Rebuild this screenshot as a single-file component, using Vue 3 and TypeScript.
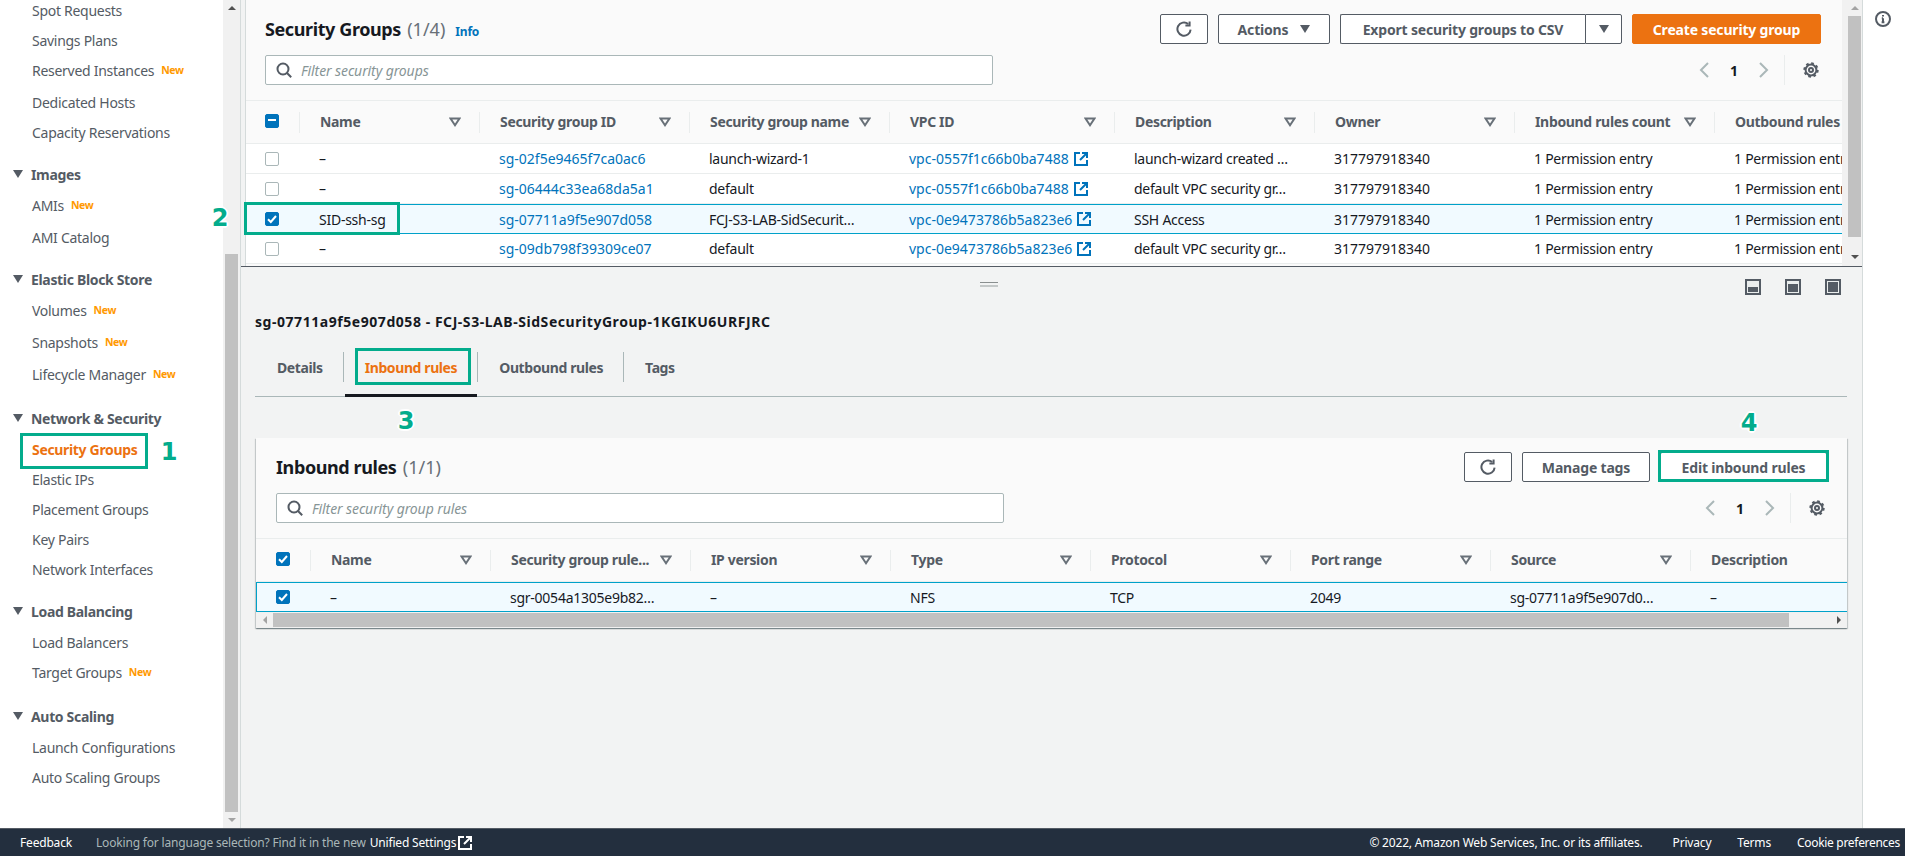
<script setup lang="ts">
interface NavItem {
  label: string
  isNew?: boolean
  active?: boolean
}

interface NavSection {
  title?: string
  items: NavItem[]
}

interface SgRow {
  name: string
  id: string
  sgName: string
  vpc: string
  desc: string
  selected?: boolean
}

const navSections: NavSection[] = [
  {
    items: [
      { label: 'Spot Requests' },
      { label: 'Savings Plans' },
      { label: 'Reserved Instances', isNew: true },
      { label: 'Dedicated Hosts' },
      { label: 'Capacity Reservations' }
    ]
  },
  {
    title: 'Images',
    items: [{ label: 'AMIs', isNew: true }, { label: 'AMI Catalog' }]
  },
  {
    title: 'Elastic Block Store',
    items: [
      { label: 'Volumes', isNew: true },
      { label: 'Snapshots', isNew: true },
      { label: 'Lifecycle Manager', isNew: true }
    ]
  },
  {
    title: 'Network & Security',
    items: [
      { label: 'Security Groups', active: true },
      { label: 'Elastic IPs' },
      { label: 'Placement Groups' },
      { label: 'Key Pairs' },
      { label: 'Network Interfaces' }
    ]
  },
  {
    title: 'Load Balancing',
    items: [{ label: 'Load Balancers' }, { label: 'Target Groups', isNew: true }]
  },
  {
    title: 'Auto Scaling',
    items: [{ label: 'Launch Configurations' }, { label: 'Auto Scaling Groups' }]
  }
]

const sgColumns = [
  'Name',
  'Security group ID',
  'Security group name',
  'VPC ID',
  'Description',
  'Owner',
  'Inbound rules count',
  'Outbound rules count'
]

const sgRows: SgRow[] = [
  {
    name: '–',
    id: 'sg-02f5e9465f7ca0ac6',
    sgName: 'launch-wizard-1',
    vpc: 'vpc-0557f1c66b0ba7488',
    desc: 'launch-wizard created …'
  },
  {
    name: '–',
    id: 'sg-06444c33ea68da5a1',
    sgName: 'default',
    vpc: 'vpc-0557f1c66b0ba7488',
    desc: 'default VPC security gr…'
  },
  {
    name: 'SID-ssh-sg',
    id: 'sg-07711a9f5e907d058',
    sgName: 'FCJ-S3-LAB-SidSecurit…',
    vpc: 'vpc-0e9473786b5a823e6',
    desc: 'SSH Access',
    selected: true
  },
  {
    name: '–',
    id: 'sg-09db798f39309ce07',
    sgName: 'default',
    vpc: 'vpc-0e9473786b5a823e6',
    desc: 'default VPC security gr…'
  }
]

const ruleColumns = [
  'Name',
  'Security group rule...',
  'IP version',
  'Type',
  'Protocol',
  'Port range',
  'Source',
  'Description'
]

const ruleCells = ['–', 'sgr-0054a1305e9b82…', '–', 'NFS', 'TCP', '2049', 'sg-07711a9f5e907d0…', '–']

const tabs = ['Details', 'Inbound rules', 'Outbound rules', 'Tags']
</script>

<template>
  <div class="app">
    <div class="body-row">
      <aside class="sidebar">
        <nav class="nav">
          <section v-for="(section, i) in navSections" :key="i" class="nav-section">
            <div v-if="section.title" class="nav-heading">
              <span class="caret"></span>{{ section.title }}
            </div>
            <a
              v-for="item in section.items"
              :key="item.label"
              :class="['nav-item', { 'has-new': item.isNew, active: item.active }]"
            >
              {{ item.label }}<span v-if="item.isNew" class="new-tag">New</span>
            </a>
          </section>
        </nav>
        <div class="vscroll side-scroll">
          <span class="arrow up"></span>
          <span class="thumb"></span>
          <span class="arrow down"></span>
        </div>
      </aside>

      <main class="main">
        <div class="top-pane">
          <div class="panel top-panel">
            <div class="panel-head">
              <div class="head-row">
                <h1 class="title">Security Groups <span class="count">(1/4)</span><a class="info">Info</a></h1>
                <div class="actions">
                  <button class="btn icon-btn">
                    <svg width="16" height="16" viewBox="0 0 16 16" class="ico">
                      <path d="M14.6 8.6A6.6 6.6 0 1 1 12.2 3" />
                      <path d="M13.6 .4v4.2H9.4" />
                    </svg>
                  </button>
                  <button class="btn actions-btn">Actions<span class="btn-caret"></span></button>
                  <div class="split">
                    <button class="btn export-btn">Export security groups to CSV</button>
                    <button class="btn split-caret"><span class="btn-caret"></span></button>
                  </div>
                  <button class="btn primary">Create security group</button>
                </div>
              </div>
              <div class="filter-row">
                <div class="filter filter-top">
                  <svg width="16" height="16" viewBox="0 0 16 16" class="ico search">
                    <circle cx="7" cy="7" r="5.5" />
                    <path d="M11 11l4.2 4.2" />
                  </svg>
                  <span class="placeholder">Filter security groups</span>
                </div>
                <div class="pager">
                  <svg width="30" height="16" viewBox="0 0 30 16" class="chev"><path d="M19 1l-7 7 7 7" /></svg>
                  <span class="page-num">1</span>
                  <svg width="30" height="16" viewBox="0 0 30 16" class="chev"><path d="M11 1l7 7-7 7" /></svg>
                  <span class="pager-sep"></span>
                  <svg width="16" height="16" viewBox="0 0 16 16" class="ico gear">
                    <circle cx="8" cy="8" r="5.4" />
                    <circle cx="8" cy="8" r="2" />
                    <circle cx="8" cy="8" r="6.6" class="teeth" />
                  </svg>
                </div>
              </div>
            </div>

            <div class="grid-row header-row sg-cols">
              <div class="th check-cell"><span class="checkbox mixed"></span></div>
              <div v-for="col in sgColumns" :key="col" class="th">
                {{ col }}
                <svg width="12" height="10" viewBox="0 0 12 10" class="sort"><path d="M1.5 1.5h9L6 8.2z" /></svg>
              </div>
            </div>
            <div
              v-for="row in sgRows"
              :key="row.id"
              :class="['grid-row', 'body-cells', 'sg-cols', { selected: row.selected }]"
            >
              <div class="td check-cell">
                <span :class="['checkbox', { checked: row.selected }]">
                  <svg v-if="row.selected" width="14" height="14" viewBox="0 0 14 14" class="tick"><path d="M3 7.2l2.8 2.8L11 4" /></svg>
                </span>
              </div>
              <div class="td">{{ row.name }}</div>
              <div class="td"><a class="link">{{ row.id }}</a></div>
              <div class="td">{{ row.sgName }}</div>
              <div class="td">
                <a class="link">{{ row.vpc }}</a>
                <svg width="14" height="14" viewBox="0 0 14 14" class="ext">
                  <path d="M6 1H1v12h12V8" />
                  <path d="M8 1h5v5M13 1L6 8" />
                </svg>
              </div>
              <div class="td">{{ row.desc }}</div>
              <div class="td num">317797918340</div>
              <div class="td">1 Permission entry</div>
              <div class="td">1 Permission entry</div>
            </div>
          </div>
          <div class="vscroll top-scroll">
            <span class="arrow up"></span>
            <span class="thumb"></span>
            <span class="arrow down"></span>
          </div>
        </div>

        <div class="lower-pane">
          <div class="handle"></div>
          <div class="view-icons">
            <span class="view-icon bottom"></span>
            <span class="view-icon middle"></span>
            <span class="view-icon full"></span>
          </div>
          <h2 class="detail-title">sg-07711a9f5e907d058 - FCJ-S3-LAB-SidSecurityGroup-1KGIKU6URFJRC</h2>
          <div class="tabs">
            <div v-for="tab in tabs" :key="tab" :class="['tab', { 'tab-active': tab === 'Inbound rules' }]">{{ tab }}</div>
          </div>

          <div class="panel rules-panel">
            <div class="panel-head">
              <div class="head-row">
                <h1 class="title">Inbound rules <span class="count">(1/1)</span></h1>
                <div class="actions">
                  <button class="btn icon-btn">
                    <svg width="16" height="16" viewBox="0 0 16 16" class="ico">
                      <path d="M14.6 8.6A6.6 6.6 0 1 1 12.2 3" />
                      <path d="M13.6 .4v4.2H9.4" />
                    </svg>
                  </button>
                  <button class="btn manage-btn">Manage tags</button>
                  <button class="btn edit-btn">Edit inbound rules</button>
                </div>
              </div>
              <div class="filter-row">
                <div class="filter filter-rules">
                  <svg width="16" height="16" viewBox="0 0 16 16" class="ico search">
                    <circle cx="7" cy="7" r="5.5" />
                    <path d="M11 11l4.2 4.2" />
                  </svg>
                  <span class="placeholder">Filter security group rules</span>
                </div>
                <div class="pager">
                  <svg width="30" height="16" viewBox="0 0 30 16" class="chev"><path d="M19 1l-7 7 7 7" /></svg>
                  <span class="page-num">1</span>
                  <svg width="30" height="16" viewBox="0 0 30 16" class="chev"><path d="M11 1l7 7-7 7" /></svg>
                  <span class="pager-sep"></span>
                  <svg width="16" height="16" viewBox="0 0 16 16" class="ico gear">
                    <circle cx="8" cy="8" r="5.4" />
                    <circle cx="8" cy="8" r="2" />
                    <circle cx="8" cy="8" r="6.6" class="teeth" />
                  </svg>
                </div>
              </div>
            </div>

            <div class="grid-row header-row rule-cols">
              <div class="th check-cell">
                <span class="checkbox checked">
                  <svg width="14" height="14" viewBox="0 0 14 14" class="tick"><path d="M3 7.2l2.8 2.8L11 4" /></svg>
                </span>
              </div>
              <div v-for="col in ruleColumns" :key="col" class="th">
                {{ col }}
                <svg width="12" height="10" viewBox="0 0 12 10" class="sort"><path d="M1.5 1.5h9L6 8.2z" /></svg>
              </div>
            </div>
            <div class="grid-row body-cells rule-cols selected rule-row">
              <div class="td check-cell">
                <span class="checkbox checked">
                  <svg width="14" height="14" viewBox="0 0 14 14" class="tick"><path d="M3 7.2l2.8 2.8L11 4" /></svg>
                </span>
              </div>
              <div v-for="(cell, i) in ruleCells" :key="i" class="td">{{ cell }}</div>
            </div>
            <div class="hscroll">
              <span class="arrow left"></span>
              <span class="hthumb"></span>
              <span class="arrow right"></span>
            </div>
          </div>
        </div>
      </main>

      <aside class="rail">
        <svg width="16" height="16" viewBox="0 0 16 16" class="rail-info">
          <circle cx="8" cy="8" r="7" />
          <path d="M8 7.2v4M6.6 11.2h2.8M6.8 7.2H8" />
          <path d="M8 4v1.6" />
        </svg>
      </aside>
    </div>

    <footer class="footer">
      <a class="foot-link feedback">Feedback</a>
      <span class="foot-note">Looking for language selection? Find it in the new</span>
      <a class="foot-link unified">Unified Settings</a>
      <svg width="14" height="14" viewBox="0 0 14 14" class="ext foot-ext">
        <path d="M6 1H1v12h12V8" />
        <path d="M8 1h5v5M13 1L6 8" />
      </svg>
      <span class="foot-right">
        <span class="copy">© 2022, Amazon Web Services, Inc. or its affiliates.</span>
        <a class="foot-link">Privacy</a>
        <a class="foot-link">Terms</a>
        <a class="foot-link cookie">Cookie preferences</a>
      </span>
    </footer>

    <!-- tutorial markers drawn over the console -->
    <div class="mark box-1"></div>
    <div class="mark box-2"></div>
    <div class="mark box-3"></div>
    <div class="mark box-4"></div>
    <span class="step step-1">1</span>
    <span class="step step-2">2</span>
    <span class="step step-3">3</span>
    <span class="step step-4">4</span>
  </div>
</template>

<style>
html,
body {
  margin: 0;
  overflow: hidden;
  background: #f2f3f3;
}
</style>

<style scoped>
.app {
  position: relative;
  width: 1905px;
  height: 856px;
  display: flex;
  flex-direction: column;
  overflow: hidden;
  font-family: "Noto Sans", "Open Sans", sans-serif;
  font-size: 14px;
  color: #16191f;
  background: #f2f3f3;
}

.body-row {
  flex: 1;
  min-height: 0;
  display: flex;
}

/* left navigation */
.sidebar {
  width: 240px;
  flex-shrink: 0;
  display: flex;
  background: #fff;
  border-right: 1px solid #d5dbdb;
  overflow: hidden;
}

.nav {
  width: 223px;
  flex-shrink: 0;
  margin-top: -5px;
  letter-spacing: -0.28px;
}

.nav-section + .nav-section {
  margin-top: 13px;
}

.nav-heading {
  height: 30px;
  padding-bottom: 2px;
  box-sizing: border-box;
  display: flex;
  align-items: center;
  font-weight: 700;
  color: #545b64;
  letter-spacing: -0.33px;
}

.caret {
  width: 0;
  height: 0;
  margin: 0 8px 0 13px;
  border-left: 5px solid transparent;
  border-right: 5px solid transparent;
  border-top: 8px solid #545b64;
}

.nav-item {
  height: 30px;
  padding-left: 32px;
  display: flex;
  align-items: center;
  color: #545b64;
}

.nav-item.has-new {
  height: 32px;
  padding-bottom: 2px;
  box-sizing: border-box;
}

.nav-item.active {
  color: #ec7211;
  font-weight: 700;
  letter-spacing: -0.33px;
}

.new-tag {
  margin-left: 7px;
  font-size: 10.5px;
  font-weight: 700;
  letter-spacing: -0.4px;
  color: #ff9900;
}

/* scrollbars */
.vscroll {
  display: flex;
  flex-direction: column;
  background: #f1f1f1;
}

.side-scroll {
  width: 17px;
  justify-content: space-between;
}

.side-scroll .thumb {
  display: block;
  width: 13px;
  height: 558px;
  margin-top: auto;
  margin-left: 2px;
  background: #c1c1c1;
}

.top-scroll {
  width: 20px;
  flex-shrink: 0;
  padding-left: 6px;
  box-sizing: border-box;
  height: 266px;
}

.top-scroll .thumb {
  display: block;
  width: 13px;
  height: 221px;
  background: #c1c1c1;
}

.vscroll .arrow {
  flex-shrink: 0;
  height: 16px;
  display: flex;
  align-items: center;
  justify-content: center;
  width: 13px;
  margin-left: 2px;
}

.top-scroll .arrow {
  margin-left: 0;
}

.top-scroll .arrow.down {
  margin-top: auto;
  height: 18px;
}

.arrow::before {
  content: "";
  width: 0;
  height: 0;
  border: 4px solid transparent;
}

.arrow.up::before {
  border-top: 0;
  border-bottom: 4px solid #505050;
}

.arrow.down::before {
  border-bottom: 0;
  border-top: 4px solid #a3a3a3;
}

.top-scroll .arrow.down::before {
  border-top-color: #505050;
}

.top-scroll .arrow.up::before {
  border-bottom-color: #a3a3a3;
}

.side-scroll .arrow.up::before {
  border-bottom-color: #505050;
}

/* main column */
.main {
  width: 1621px;
  flex-shrink: 0;
  display: flex;
  flex-direction: column;
  border-right: 1px solid #d5dbdb;
}

.top-pane {
  height: 267px;
  flex-shrink: 0;
  box-sizing: border-box;
  padding-left: 4px;
  display: flex;
  border-bottom: 1px solid #545b64;
  overflow: hidden;
}

.panel {
  background: #fafafa;
  overflow: hidden;
}

.top-panel {
  flex: 1;
  min-width: 0;
  border-left: 1px solid #d5dbdb;
}

.panel-head {
  height: 101px;
  padding: 14px 21px 0 19px;
  box-sizing: border-box;
  border-bottom: 1px solid #eaeded;
}

.head-row {
  display: flex;
  align-items: flex-start;
  justify-content: space-between;
  height: 30px;
}

.title {
  margin: 0;
  font-size: 18px;
  line-height: 30px;
  font-weight: 700;
  letter-spacing: -0.4px;
  color: #16191f;
}

.count {
  margin-left: 2px;
  font-weight: 400;
  letter-spacing: 0;
  color: #687078;
}

.info {
  margin-left: 10px;
  font-size: 12px;
  font-weight: 700;
  letter-spacing: -0.2px;
  color: #0073bb;
}

.actions {
  display: flex;
  gap: 10px;
}

.split {
  display: flex;
}

.btn {
  height: 30px;
  padding: 0;
  box-sizing: border-box;
  display: flex;
  align-items: center;
  justify-content: center;
  background: #fff;
  border: 1px solid #545b64;
  border-radius: 2px;
  font-family: inherit;
  font-size: 14px;
  font-weight: 700;
  letter-spacing: -0.18px;
  color: #545b64;
}

.icon-btn {
  width: 48px;
}

.actions-btn {
  width: 112px;
}

.btn-caret {
  width: 0;
  height: 0;
  margin-left: 12px;
  border-left: 5px solid transparent;
  border-right: 5px solid transparent;
  border-top: 8px solid #545b64;
}

.export-btn {
  width: 245px;
  border-right: 0;
  border-radius: 2px 0 0 2px;
}

.split-caret {
  width: 37px;
  border-radius: 0 2px 2px 0;
}

.split-caret .btn-caret {
  margin-left: 0;
}

.primary {
  width: 189px;
  background: #ec7211;
  border-color: #ec7211;
  color: #fff;
}

.manage-btn {
  width: 128px;
}

.edit-btn {
  width: 167px;
}

.ico {
  fill: none;
  stroke: #545b64;
  stroke-width: 2;
}

.filter-row {
  margin-top: 11px;
  display: flex;
  justify-content: space-between;
}

.filter {
  height: 30px;
  box-sizing: border-box;
  display: flex;
  align-items: center;
  gap: 9px;
  padding-left: 10px;
  background: #fff;
  border: 1px solid #aab7b8;
  border-radius: 2px;
}

.filter-top {
  width: 728px;
}

.filter-rules {
  width: 728px;
}

.placeholder {
  font-style: italic;
  letter-spacing: -0.1px;
  color: #879596;
}

.pager {
  height: 30px;
  display: flex;
  align-items: center;
}

.chev {
  fill: none;
  stroke: #aab7b8;
  stroke-width: 2;
}

.page-num {
  width: 30px;
  text-align: center;
  font-weight: 700;
  font-size: 14px;
  color: #16191f;
}

.pager-sep {
  width: 1px;
  height: 30px;
  margin: 0 18px 0 5px;
  background: #eaeded;
}

.gear .teeth {
  stroke-width: 2.2;
  stroke-dasharray: 2.6 2.58;
}

.gear {
  margin-right: 2px;
}

/* grids */
.grid-row {
  display: grid;
  white-space: nowrap;
}

.sg-cols {
  grid-template-columns: 54px 180px 210px 200px 225px 200px 200px 200px 200px;
}

.rule-cols {
  grid-template-columns: 54px 180px 200px 200px 200px 200px 200px 200px 200px;
}

.header-row {
  height: 43px;
  border-bottom: 1px solid #eaeded;
  box-sizing: border-box;
  background: #fafafa;
}

.th {
  position: relative;
  display: flex;
  align-items: center;
  padding: 0 0 2px 20px;
  font-weight: 700;
  letter-spacing: -0.33px;
  color: #545b64;
}

.th::after {
  content: "";
  position: absolute;
  top: 11px;
  right: 0;
  width: 1px;
  height: 21px;
  background: #eaeded;
}

.th.check-cell,
.td.check-cell {
  padding-left: 19px;
}

.sort {
  position: absolute;
  right: 19px;
  top: 16px;
  fill: none;
  stroke: #687078;
  stroke-width: 2;
}

.body-cells {
  height: 30px;
  box-sizing: border-box;
  background: #fff;
  border-bottom: 1px solid #eaeded;
}

.body-cells.selected {
  background: #f1faff;
  border-top: 1px solid #00a1c9;
  border-bottom: 1px solid #00a1c9;
}

.td {
  display: flex;
  align-items: center;
  padding-left: 19px;
  overflow: hidden;
  letter-spacing: -0.25px;
}

.td.num,
.link {
  letter-spacing: 0;
}

.link {
  color: #0073bb;
}

.ext {
  margin-left: 5px;
  fill: none;
  stroke: #0073bb;
  stroke-width: 2;
}

.checkbox {
  width: 14px;
  height: 14px;
  box-sizing: border-box;
  position: relative;
  display: block;
  background: #fff;
  border: 1px solid #aab7b8;
  border-radius: 2px;
}

.checkbox.checked,
.checkbox.mixed {
  background: #0073bb;
  border-color: #0073bb;
}

.checkbox.mixed::before {
  content: "";
  position: absolute;
  left: 2px;
  top: 4px;
  width: 8px;
  height: 2px;
  background: #fff;
}

.tick {
  position: absolute;
  left: -1px;
  top: -1px;
  fill: none;
  stroke: #fff;
  stroke-width: 2;
}

/* lower split pane */
.lower-pane {
  flex: 1;
  min-height: 0;
  position: relative;
  padding: 0 15px;
  overflow: hidden;
}

.handle {
  position: absolute;
  left: 739px;
  top: 15px;
  width: 18px;
  height: 2px;
  border-top: 1px solid #8a8f8f;
  border-bottom: 2px solid #c4c8c8;
}

.view-icons {
  display: flex;
  justify-content: flex-end;
  gap: 24px;
  padding: 12px 6px 0 0;
}

.view-icon {
  position: relative;
  width: 16px;
  height: 16px;
  box-sizing: border-box;
  border: 2px solid #545b64;
  background: #eaeded;
}

.view-icon::after {
  content: "";
  position: absolute;
  left: 1px;
  right: 1px;
  bottom: 1px;
  background: #545b64;
}

.view-icon.bottom::after {
  top: 6px;
}

.view-icon.middle::after {
  top: 3px;
}

.view-icon.full::after {
  top: 1px;
}

.detail-title {
  margin: 17px 0 0 -1px;
  font-size: 14px;
  line-height: 20px;
  font-weight: 700;
  letter-spacing: 0.55px;
}

.tabs {
  margin: 6px 0 0 -1px;
  height: 59px;
  box-sizing: border-box;
  padding-left: 1px;
  display: flex;
  border-bottom: 1px solid #aab7b8;
}

.tab {
  position: relative;
  height: 58px;
  box-sizing: border-box;
  padding: 0 21px;
  display: flex;
  align-items: center;
  font-weight: 700;
  letter-spacing: -0.4px;
  color: #545b64;
}

.tab::after {
  content: "";
  position: absolute;
  right: 0;
  top: 14px;
  width: 1px;
  height: 30px;
  background: #aab7b8;
}

.tab:last-child::after {
  display: none;
}

.tab-active {
  color: #ec7211;
}

.tab-active::before {
  content: "";
  position: absolute;
  left: 1px;
  right: 1px;
  bottom: -1px;
  height: 3px;
  background: #16191f;
}

.rules-panel {
  margin-top: 41px;
  width: 1591px;
  box-shadow: 0 1px 1px 0 rgba(0, 28, 36, 0.3), 1px 1px 1px 0 rgba(0, 28, 36, 0.15), -1px 1px 1px 0 rgba(0, 28, 36, 0.15);
}

.rules-panel .panel-head {
  padding-left: 20px;
  padding-right: 20px;
}

.rules-panel .grid-row {
  margin-left: 1px;
}

.rule-row {
  border-left: 1px solid #00a1c9;
  margin-left: 0 !important;
}

.hscroll {
  height: 16px;
  display: flex;
  align-items: center;
  background: #f1f1f1;
}

.hthumb {
  width: 1516px;
  height: 14px;
  background: #c1c1c1;
}

.hscroll .arrow {
  width: 17px;
  display: flex;
  justify-content: center;
}

.hscroll .arrow.right {
  margin-left: auto;
  width: 16px;
}

.arrow.left::before {
  border-left: 0;
  border-right: 4px solid #a3a3a3;
}

.arrow.right::before {
  border-right: 0;
  border-left: 4px solid #505050;
}

/* right rail */
.rail {
  flex: 1;
  background: #fff;
}

.rail-info {
  display: block;
  margin: 11px 0 0 12px;
  fill: none;
  stroke: #545b64;
  stroke-width: 2;
}

/* footer */
.footer {
  height: 28px;
  flex-shrink: 0;
  box-sizing: border-box;
  padding: 0 5px 0 20px;
  display: flex;
  align-items: center;
  background: #232f3e;
  font-size: 12px;
  letter-spacing: -0.18px;
  color: #aab7b8;
  border-top: 1px solid #545b64;
}

.foot-link {
  color: #fff;
}

.feedback {
  margin-right: 24px;
}

.unified {
  margin-left: 4px;
}

.foot-ext {
  margin-left: 2px;
  stroke: #fff;
}

.foot-right {
  margin-left: auto;
  display: flex;
  align-items: center;
  gap: 26px;
}

.copy {
  color: #fff;
  margin-right: 4px;
}

.cookie {
  letter-spacing: -0.3px;
}

/* tutorial markers */
.mark {
  position: absolute;
  box-sizing: border-box;
  border: 3px solid #03ac8c;
  pointer-events: none;
}

.box-1 {
  left: 20px;
  top: 433px;
  width: 128px;
  height: 36px;
}

.box-2 {
  left: 244px;
  top: 202px;
  width: 156px;
  height: 33px;
}

.box-3 {
  left: 355px;
  top: 348px;
  width: 116px;
  height: 37px;
}

.box-4 {
  left: 1658px;
  top: 450px;
  width: 171px;
  height: 32px;
}

.step {
  position: absolute;
  font-family: "DejaVu Sans", sans-serif;
  font-size: 24px;
  line-height: 24px;
  font-weight: 700;
  color: #03ac8c;
  transform: translate(-50%, -50%);
  text-shadow: 2px 0 0 #fff, -2px 0 0 #fff, 0 2px 0 #fff, 0 -2px 0 #fff, 1px 1px 0 #fff, -1px -1px 0 #fff, 1px -1px 0 #fff, -1px 1px 0 #fff;
}

.step-1 {
  left: 169px;
  top: 452px;
}

.step-2 {
  left: 220px;
  top: 218px;
}

.step-3 {
  left: 406px;
  top: 421px;
}

.step-4 {
  left: 1749px;
  top: 423px;
}
</style>
